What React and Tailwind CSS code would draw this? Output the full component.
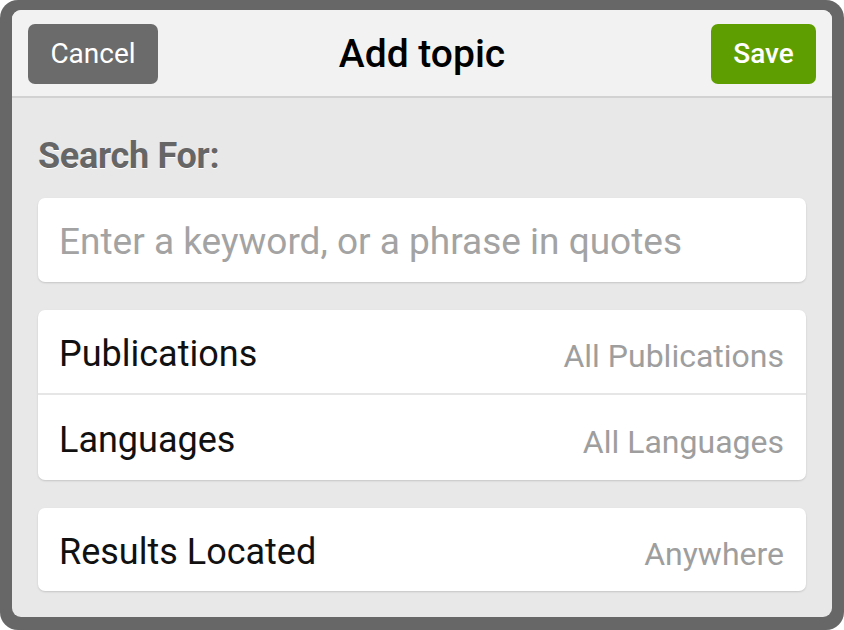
import React from 'react';

// Settings-style row inside a white card
function Row({ label, value, last, h = 'h-[85px]' }) {
  return (
    <div className={`flex ${h} items-center justify-between pl-[21px] pr-[22px] ${last ? '' : 'border-b-2 border-[#e6e6e6]'}`}>
      <span className="pt-[4px] text-[36px] leading-none text-[#111]">{label}</span>
      <span className="pt-[8px] text-[32px] leading-none text-[#9e9e9e]">{value}</span>
    </div>
  );
}

export default function App() {
  return (
    <div className="h-[630px] w-[844px] bg-white font-['Roboto',sans-serif]">
      {/* --- Dark frame --- */}
      <div className="h-full w-full rounded-[18px] bg-[#676767] pt-[10px] pr-[12px] pb-[13px] pl-[12px]">
        <div className="flex h-full flex-col overflow-hidden rounded-[9px] bg-[#e8e8e8]">
          {/* Header */}
          <header className="grid h-[88px] shrink-0 grid-cols-[1fr_auto_1fr] items-center border-b-2 border-[#d2d2d2] bg-[#f2f2f2] pl-[16px] pr-[16px] pt-[2px]">
            <button className="h-[60px] w-[130px] justify-self-start rounded-[7px] bg-[#6b6b6b] text-[28px] text-white">
              Cancel
            </button>
            <h1 className="text-[39px] font-medium text-black">Add topic</h1>
            <button className="h-[60px] w-[105px] justify-self-end rounded-[7px] bg-[#5f9e00] text-[28px] font-medium text-white">
              Save
            </button>
          </header>

          {/* Body */}
          <main className="flex flex-1 flex-col px-[26px] pt-[38px]">
            <div className="h-[40px] text-[36px] leading-[40px] font-bold tracking-[-0.3px] text-[#666] [text-shadow:0_1px_0_#fff]">
              Search For:
            </div>

            <div className="mt-[22px] flex h-[84px] items-center rounded-[7px] bg-white pl-[21px] shadow-[0_1px_2px_rgba(0,0,0,0.15)]">
              <span className="pt-[2px] text-[37px] leading-none text-[#a3a3a3]">Enter a keyword, or a phrase in quotes</span>
            </div>

            <div className="mt-[28px] rounded-[7px] bg-white shadow-[0_1px_2px_rgba(0,0,0,0.15)]">
              <Row label="Publications" value="All Publications" />
              <Row label="Languages" value="All Languages" last />
            </div>

            <div className="mt-[28px] rounded-[7px] bg-white shadow-[0_1px_2px_rgba(0,0,0,0.15)]">
              <Row label="Results Located" value="Anywhere" last h="h-[83px]" />
            </div>
          </main>
        </div>
      </div>
    </div>
  );
}
